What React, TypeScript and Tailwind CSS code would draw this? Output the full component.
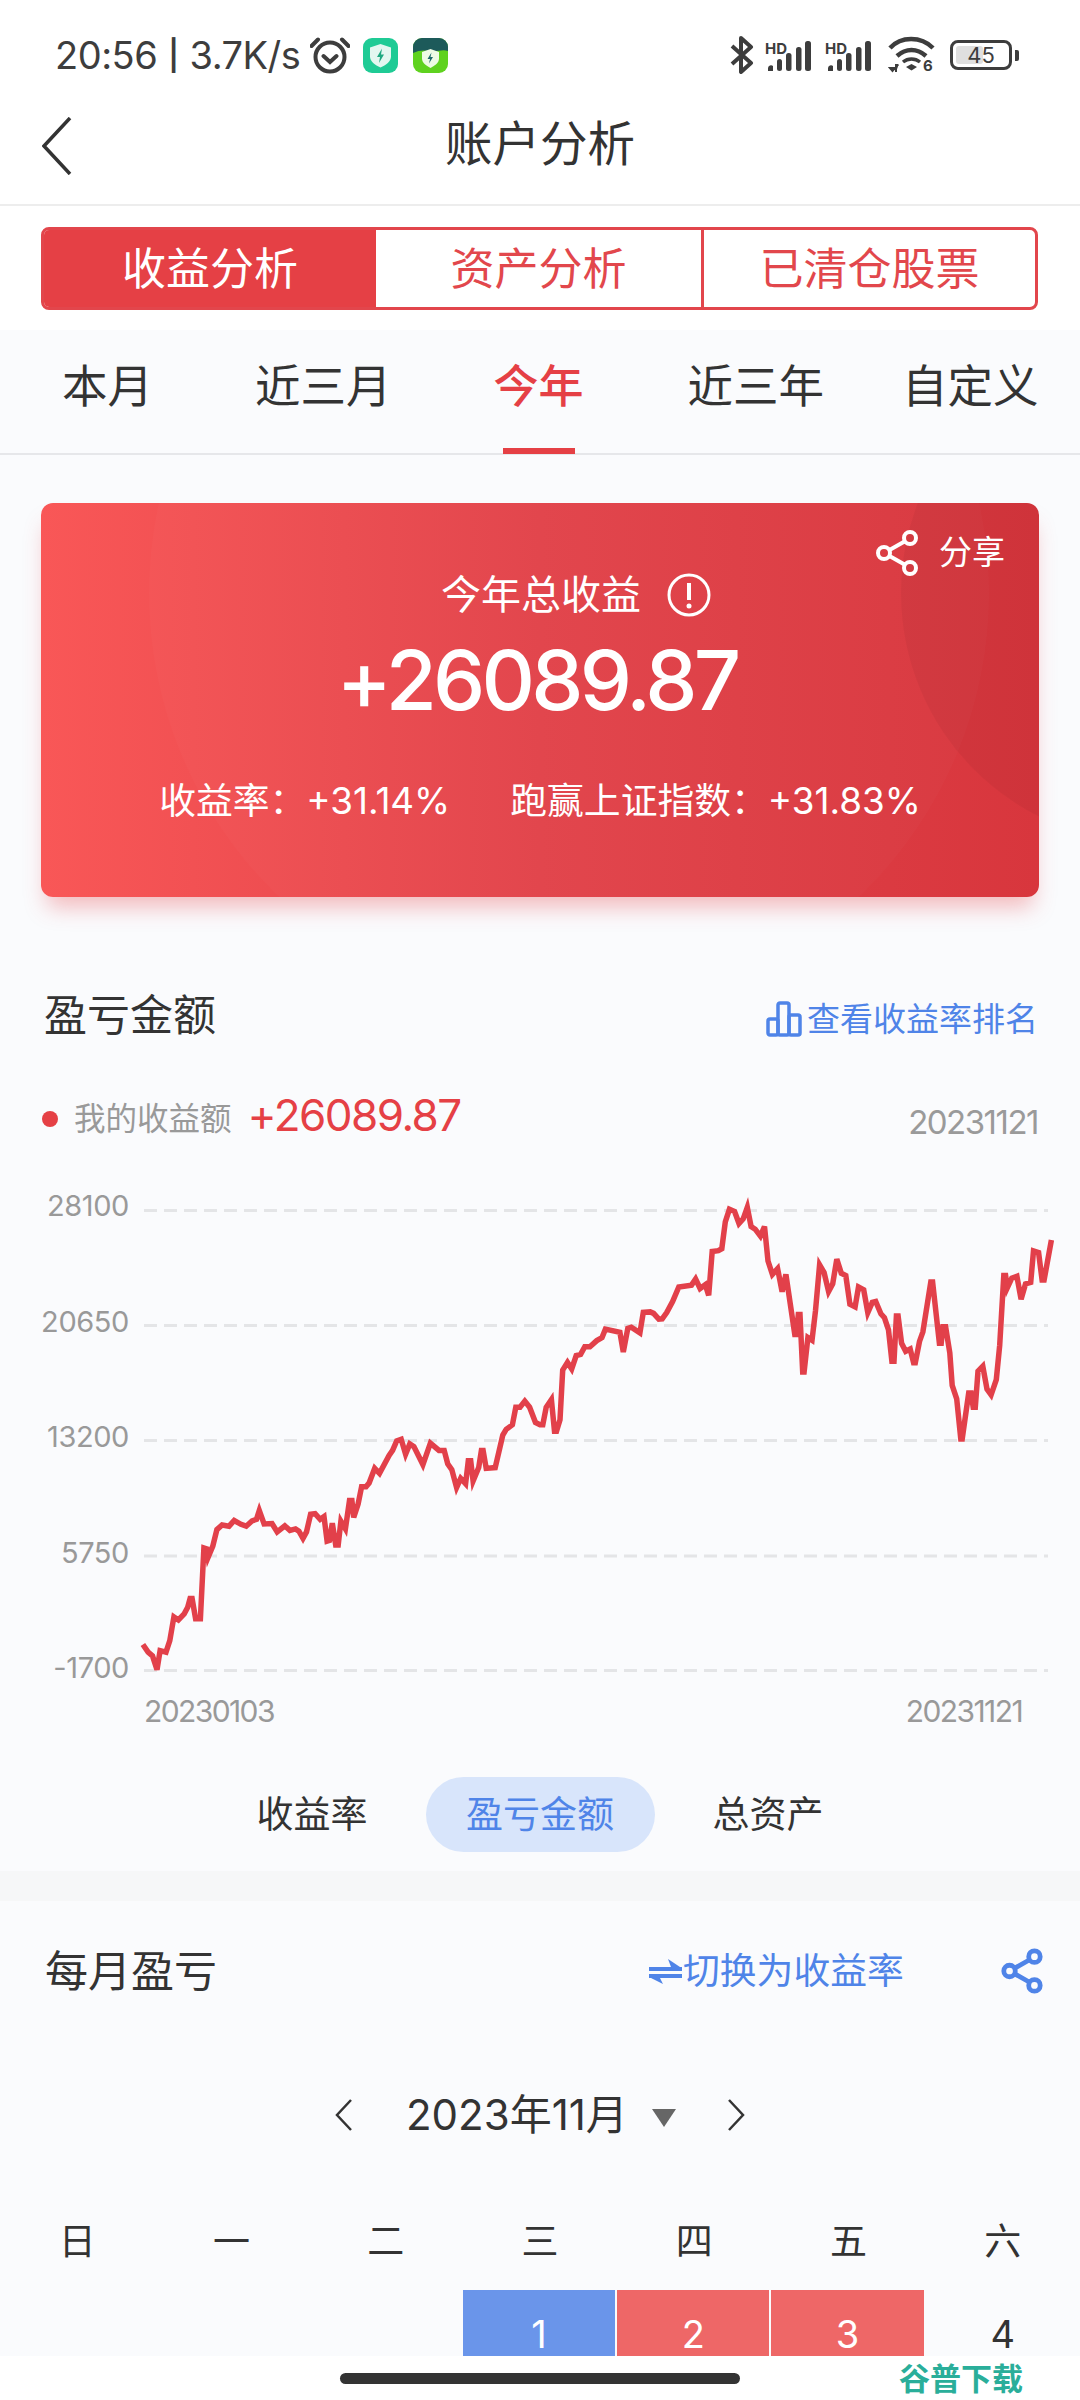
import React from "react";

const leftPts: number[][] = [[415,1292],[430,1312],[443,1322],[456,1358],[465,1308],[482,1312],[493,1282],[505,1220],[518,1228],[535,1212],[545,1195],[552,1172],[558,1172],[568,1225],[582,1225],[592,1040],[600,1042],[604,1065],[618,1035],[630,992],[645,980],[665,983],[680,968],[700,978],[715,983],[732,969],[745,965],[753,942],[767,977],[790,976],[805,998],[827,982],[842,994],[858,990],[868,996],[880,1015],[890,998],[902,952],[915,950],[930,965],[941,958],[950,1022],[957,1020],[965,975],[975,1032],[982,1032],[990,970],[1003,990],[1015,916],[1022,916],[1027,960],[1040,925],[1050,880],[1063,880],[1072,870],[1088,832],[1102,845],[1130,798],[1140,785],[1152,760],[1165,756],[1178,795],[1190,768],[1202,775],[1228,822],[1250,766],[1275,785],[1290,785],[1300,820],[1312,835],[1326,882],[1338,858],[1352,872],[1360,812],[1367,812],[1374,865],[1390,830],[1398,785],[1403,785],[1412,832],[1438,830],[1460,745],[1470,730],[1488,718],[1498,672],[1510,672],[1524,656],[1538,672],[1555,712]];
const rightPts: number[][] = [[0,718],[8,718],[18,672],[33,652],[42,735],[48,735],[58,705],[66,575],[80,555],[92,572],[105,537],[118,534],[130,514],[145,514],[165,498],[180,490],[190,468],[232,476],[242,528],[255,466],[265,463],[290,478],[300,424],[320,423],[330,427],[345,442],[355,441],[368,425],[385,396],[403,358],[440,353],[452,337],[465,362],[480,352],[490,380],[500,265],[518,263],[528,258],[538,188],[550,155],[565,161],[578,192],[590,180],[602,150],[613,200],[625,207],[640,225],[652,200],[662,290],[675,325],[690,310],[703,370],[714,325],[740,482],[745,482],[750,430],[755,430],[763,580],[767,580],[778,490],[790,497],[800,420],[812,300],[825,320],[838,370],[850,350],[862,285],[875,322],[888,328],[900,403],[915,410],[925,358],[940,365],[952,425],[965,398],[975,396],[990,428],[1000,438],[1012,470],[1022,552],[1028,552],[1035,434],[1040,434],[1050,505],[1062,526],[1075,520],[1085,556],[1090,556],[1102,500],[1112,475],[1135,345],[1140,345],[1160,505],[1165,505],[1170,462],[1178,462],[1190,530],[1197,615],[1210,650],[1222,755],[1226,755],[1245,635],[1252,635],[1258,672],[1264,672],[1272,578],[1286,565],[1298,625],[1310,640],[1325,600],[1335,510],[1347,328],[1352,328],[1357,360],[1370,335],[1385,330],[1397,390],[1410,350],[1425,346],[1433,264],[1448,268],[1458,340],[1464,340],[1485,235]];

const chartTop = 1180;
const chartLeft = 130;
const linePoints = [
  ...leftPts.map(([x, y]) => [x / 2.904, 1150 + y / 2.613]),
  ...rightPts.map(([x, y]) => [540 + x / 2.904, 1150 + y / 2.613]),
]
  .map(([x, y]) => `${(x - chartLeft).toFixed(1)},${(y - chartTop).toFixed(1)}`)
  .join(" ");

const gridY = [1210.5, 1325.5, 1440.5, 1556, 1670.5];

function ShareIcon({ className, color, sw }: { className: string; color: string; sw: number }) {
  return (
    <svg viewBox="0 0 44 48" className={className} fill="none" stroke={color} strokeWidth={sw}>
      <circle cx="35" cy="9" r="6" />
      <circle cx="9" cy="24" r="6" />
      <circle cx="35" cy="39" r="6" />
      <path d="M14.500 21 29.500 12.500M14.500 27 29.500 35.500" />
    </svg>
  );
}

function Signal({ className }: { className: string }) {
  return (
    <svg viewBox="0 0 50 34" className={className} fill="#3d3d3d">
      <text x="0" y="16" fontSize="15" fontWeight="700" fontFamily="Inter, sans-serif">HD</text>
      <path d="M3 33v-3a3 3 0 0 1 5-2v5Z" />
      <rect x="12" y="21" width="5" height="12" rx="2.500" />
      <rect x="21" y="15" width="5.500" height="18" rx="2.500" />
      <rect x="31" y="9" width="5.500" height="24" rx="2.500" />
      <rect x="40" y="3" width="6" height="30" rx="2.500" />
    </svg>
  );
}

function App() {
  return (
    <div className="flex h-[2400px] w-[1080px] flex-col overflow-hidden bg-white font-['Inter','Noto_Sans_CJK_SC',sans-serif] text-[#333]">
      {/* status bar */}
      <div className="flex h-[90px] items-center pl-[55px] pt-[20px] text-[#3d3d3d]">
        <span className="flex w-[255px] items-center whitespace-nowrap text-[38px] leading-none tracking-[-0.5px]">
          20:56
          <span className="mx-[11px] text-[30px] font-semibold">|</span>
          3.7K/s
        </span>
        <svg viewBox="0 0 40 38" className="h-[38px] w-[40px]" fill="none" stroke="#3d3d3d" strokeWidth="4">
          <circle cx="20" cy="21" r="14.500" />
          <path d="M13.500 20 20 26l6.500-6M1.500 10 8 3.500M38.500 10 32 3.500" strokeLinecap="round" />
        </svg>
        <svg viewBox="0 0 35 35" className="ml-[13px] h-[35px] w-[35px]">
          <rect width="35" height="35" rx="9" fill="#1fcb95" />
          <path d="M17.500 6 28 9.500v9c0 5-5 8.500-10.500 11C12 27 7 23.500 7 18.500v-9Z" fill="#e3f7f0" />
          <path d="M19 10.500 14 19h3l-1 6 5-8.500h-3Z" fill="#1fa981" />
        </svg>
        <svg viewBox="0 0 35 35" className="ml-[15px] h-[35px] w-[35px]">
          <defs>
            <clipPath id="rr">
              <rect width="35" height="35" rx="9" />
            </clipPath>
          </defs>
          <g clipPath="url(#rr)">
            <rect width="35" height="35" fill="#5fd21f" />
            <path d="M0 0h35v13c-6-2-10 1-17 0-7-1-12-1-18 2Z" fill="#1d5a5a" />
          </g>
          <path d="M17.500 11 26 14v6.500c0 4.500-4 7-8.500 9.500C13 27.500 9 25 9 20.500V14Z" fill="#eefbe4" />
          <path d="M18.500 14.500 14.500 21h2.500l-1 4.500 4-6.500h-2.500Z" fill="#1d6a6a" />
        </svg>
        <svg viewBox="0 0 24 38" className="ml-[282px] h-[38px] w-[24px]" fill="none" stroke="#3d3d3d" strokeWidth="4" strokeLinejoin="round">
          <path d="M2 10 21 27l-10 9V2l10 9L2 28" />
        </svg>
        <Signal className="ml-[11px] h-[34px] w-[50px]" />
        <Signal className="ml-[10px] h-[34px] w-[50px]" />
        <svg viewBox="0 0 48 38" className="ml-[13px] h-[38px] w-[48px]" fill="none" stroke="#3d3d3d" strokeWidth="4.500">
          <path d="M2 12C13 0 33 0 45 12M9 20c9-8 20-8 29 0" />
          <path d="M15 26c5-4 12-4 17 0" strokeWidth="3.500" />
          <path d="M18 31l5.500-3 5.500 3-5.500 3.500Z" fill="#3d3d3d" stroke="none" />
          <path d="M2 32h5l-2.500 3ZM8 36v-7h2.500" fill="#3d3d3d" strokeWidth="2" />
          <text x="35" y="35" fontSize="15" fontWeight="700" fill="#3d3d3d" stroke="none" fontFamily="Inter, sans-serif">6</text>
        </svg>
        <div className="relative ml-[14px] flex h-[30px] w-[62px] items-center justify-center rounded-[8px] border-[3px] border-[#3d3d3d] text-[22px] leading-none text-[#3d3d3d]">
          <div className="absolute bottom-[3px] left-[3px] top-[3px] w-[27px] rounded-[3px] bg-[#dfdfdf]" />
          <span className="relative">45</span>
        </div>
        <div className="ml-[3px] h-[11px] w-[4px] rounded-r-[2px] bg-[#3d3d3d]" />
      </div>

      {/* nav */}
      <div className="relative flex h-[116px] items-center justify-center border-b-2 border-[#ededed] pb-[6px]">
        <svg viewBox="0 0 30 58" className="absolute left-[42px] top-[27px] h-[58px] w-[30px]" fill="none" stroke="#333" strokeWidth="3.500">
          <path d="M28 1 2 29l26 28" />
        </svg>
        <span className="text-[47.500px] leading-none text-[#333]">账户分析</span>
      </div>

      {/* segmented */}
      <div className="flex h-[124px] items-start px-[41px] pt-[21px]">
        <div className="flex h-[83px] w-[997px] overflow-hidden rounded-[8px] border-[3px] border-[#e2464c] text-[44px] leading-none">
          <div className="flex w-[332px] items-center justify-center bg-[#e54045] text-white">收益分析</div>
          <div className="flex w-[328px] items-center justify-center border-r-[3px] border-[#e2464c] text-[#e2474c]">资产分析</div>
          <div className="flex flex-1 items-center justify-center text-[#e2474c]">已清仓股票</div>
        </div>
      </div>

      {/* main */}
      <div className="flex min-h-0 flex-1 flex-col bg-[#fafbfd]">
        {/* tabs */}
        <div className="flex h-[125px] shrink-0 items-center border-b-2 border-[#e6e7ea] pb-[10px] pl-[62px] text-[45.500px] leading-none text-[#333]">
          <span>本月</span>
          <span className="ml-[102px]">近三月</span>
          <div className="relative ml-[102px] flex h-[115px] items-center">
            <span className="text-[45px] font-medium text-[#e54045]">今年</span>
            <div className="absolute bottom-[-10px] left-[9px] h-[6px] w-[72px] bg-[#e54045]" />
          </div>
          <span className="ml-[104px]">近三年</span>
          <span className="ml-[78px]">自定义</span>
        </div>

        {/* profit card */}
        <div className="relative mx-[41px] mt-[48px] h-[394px] shrink-0 rounded-[12px] bg-gradient-to-r from-[#f95757] via-[#e2434a] to-[#d8363d] text-white shadow-[0_16px_22px_-6px_rgba(229,64,69,0.35)]">
          <div className="absolute inset-0 overflow-hidden rounded-[12px]">
            <div className="absolute left-[108px] top-[-330px] h-[840px] w-[840px] rounded-full bg-white/[0.02]" />
            <div className="absolute left-[860px] top-[-160px] h-[500px] w-[500px] rounded-full bg-black/[0.04]" />
          </div>
          <div className="relative flex flex-col items-center">
            <div className="flex h-[102px] w-full items-start justify-end pr-[34px] pt-[26px]">
              <ShareIcon className="h-[48px] w-[44px]" color="#ffffff" sw={4} />
              <span className="ml-[20px] pt-[7px] text-[33px] leading-none">分享</span>
            </div>
            <div className="ml-[72px] mt-[-32px] flex items-center">
              <span className="text-[40px] leading-none">今年总收益</span>
              <svg viewBox="0 0 44 44" className="ml-[26px] h-[44px] w-[44px]" fill="none" stroke="#fff" strokeWidth="3">
                <circle cx="22" cy="22" r="20" />
                <path d="M22 10v17" strokeWidth="4" />
                <circle cx="22" cy="33" r="2.500" fill="#fff" stroke="none" />
              </svg>
            </div>
            <span className="mr-[6px] mt-[13px] text-[83px] font-medium leading-[100px] tracking-[-3.800px]">+26089.87</span>
            <div className="mt-[53px] flex text-[36.800px] leading-none">
              <span>{"收益率\uFF1A+31.14%"}</span>
              <span className="ml-[60px]">{"跑赢上证指数\uFF1A+31.83%"}</span>
            </div>
          </div>
        </div>

        {/* amount section */}
        <div className="mt-[88px] flex h-[60px] shrink-0 items-center justify-between pl-[44px] pr-[42px]">
          <span className="text-[43px] leading-none text-[#333]">盈亏金额</span>
          <div className="flex items-center pt-[8px]">
            <svg viewBox="0 0 36 36" className="h-[36px] w-[36px]" fill="none" stroke="#4f84e8" strokeWidth="3.500">
              <rect x="2" y="18" width="10" height="16" rx="2" />
              <rect x="12" y="2" width="11" height="32" rx="2" />
              <rect x="23" y="14" width="11" height="20" rx="2" />
            </svg>
            <span className="ml-[5px] text-[33px] leading-none text-[#4f84e8]">查看收益率排名</span>
          </div>
        </div>
        <div className="mt-[52px] flex h-[44px] shrink-0 items-center pl-[42px] pr-[42px]">
          <div className="h-[16px] w-[16px] rounded-full bg-[#e54045]" />
          <span className="ml-[16px] text-[31.500px] leading-none text-[#999]">我的收益额</span>
          <span className="ml-[16px] mt-[-8px] text-[44px] leading-none tracking-[-1.500px] text-[#e54045]">+26089.87</span>
          <span className="ml-auto pt-[6px] text-[33px] leading-none tracking-[-1.500px] text-[#9a9a9a]">20231121</span>
        </div>

        {/* chart */}
        <div className="mt-[39px] flex h-[510px] shrink-0">
          <div className="flex w-[130px] shrink-0 flex-col items-end gap-[75.500px] pr-[1px] pt-[6px] text-[29px] leading-[40px] tracking-[-0.400px] text-[#999]">
            <span>28100</span>
            <span>20650</span>
            <span>13200</span>
            <span>5750</span>
            <span>-1700</span>
          </div>
          <svg width="950" height="510" viewBox="0 0 950 510" className="shrink-0">
            {gridY.map((y) => (
              <line key={y} x1="14" x2="918" y1={y - chartTop} y2={y - chartTop} stroke="#e4e5e7" strokeWidth="3" strokeDasharray="13 7" />
            ))}
            <polyline points={linePoints} fill="none" stroke="#e2404a" strokeWidth="5.500" strokeLinejoin="miter" />
          </svg>
        </div>
        <div className="flex h-[40px] shrink-0 items-center justify-between pt-[2px] pl-[144px] pr-[58px] text-[30px] leading-none tracking-[-1.600px] text-[#999]">
          <span>20230103</span>
          <span>20231121</span>
        </div>

        {/* segments */}
        <div className="mt-[47px] flex h-[75px] shrink-0 items-center justify-center text-[37px] leading-none text-[#333]">
          <span>收益率</span>
          <span className="mx-[58px] flex h-[75px] w-[229px] items-center justify-center rounded-full bg-[#d8e5fb] text-[#4f84e8]">盈亏金额</span>
          <span>总资产</span>
        </div>
        <div className="mt-[19px] h-[30px] shrink-0 bg-[#f6f7f8]" />

        {/* monthly */}
        <div className="mt-[40px] flex h-[60px] shrink-0 items-center pl-[45px] text-[43px] leading-none text-[#333]">
          <span>每月盈亏</span>
          <svg viewBox="0 0 33 26" className="ml-[432px] h-[26px] w-[33px]" fill="#4f84e8">
            <path d="M0 9h33v4H0ZM22 9l-3-8 12 8ZM0 16h33v4H0ZM11 20l3 6L2 20Z" />
          </svg>
          <span className="ml-[1px] text-[36.800px] text-[#4f84e8]">切换为收益率</span>
          <ShareIcon className="ml-[96px] h-[46px] w-[44px]" color="#4f84e8" sw={5} />
        </div>
        <div className="mt-[84px] flex h-[60px] shrink-0 items-center pl-[335px] text-[42px] leading-none text-[#333]">
          <svg viewBox="0 0 18 32" className="h-[32px] w-[18px]" fill="none" stroke="#333" strokeWidth="2.500">
            <path d="M16 1 2 16l14 15" />
          </svg>
          <span className="ml-[53px]">2023年11月</span>
          <div className="ml-[24px] mt-[6px] h-0 w-0 border-x-[12px] border-t-[18px] border-x-transparent border-t-[#666]" />
          <svg viewBox="0 0 18 32" className="ml-[51px] h-[32px] w-[18px]" fill="none" stroke="#333" strokeWidth="2.500">
            <path d="M2 1l14 15L2 31" />
          </svg>
        </div>
        <div className="mt-[66px] grid h-[60px] shrink-0 grid-cols-7 items-center text-[37px] leading-none text-[#333]">
          {["日", "一", "二", "三", "四", "五", "六"].map((d) => (
            <span key={d} className="text-center">{d}</span>
          ))}
        </div>
        <div className="mt-[19px] grid min-h-0 flex-1 grid-cols-7 overflow-hidden text-[38px] leading-[38px]">
          <div />
          <div />
          <div />
          <div className="mr-[2px] flex justify-center bg-[#6a95ea] pt-[25px] text-white">1</div>
          <div className="mr-[2px] flex justify-center bg-[#ee6767] pt-[25px] text-white">2</div>
          <div className="mr-[2px] flex justify-center bg-[#ee6767] pt-[25px] text-white">3</div>
          <div className="flex justify-center pt-[25px] text-[#333]">4</div>
        </div>
      </div>

      {/* home indicator */}
      <div className="relative flex h-[44px] shrink-0 items-start justify-center bg-white pt-[17px]">
        <div className="h-[11px] w-[400px] rounded-full bg-[#333]" />
        <span className="absolute right-[57px] top-[7px] text-[31px] font-bold leading-none text-[#2aae9a]">谷普下载</span>
      </div>
    </div>
  );
}

export default App;
